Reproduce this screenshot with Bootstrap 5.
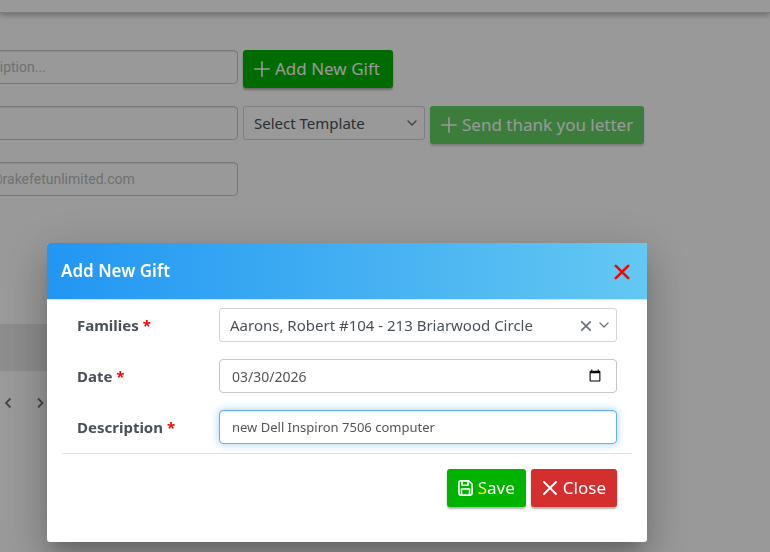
<!DOCTYPE html>
<html lang="en">
<head>
<meta charset="utf-8">
<meta name="viewport" content="width=device-width, initial-scale=1">
<title>Gifts</title>
<link href="https://cdn.jsdelivr.net/npm/bootstrap@5.3.0/dist/css/bootstrap.min.css" rel="stylesheet">
<style>
body{font-family:"Noto Sans","Open Sans",sans-serif;font-size:15px;color:#495057;background:#fff;overflow:hidden}
.topbar{height:13px;border-bottom:1px solid #d0d0d0;box-shadow:0 1px 7px rgba(0,0,0,.4)}
.content{padding-top:37px}
.rowline{height:34px;margin-bottom:22px;gap:5px}
.txt{width:250px;height:34px;margin-left:-12px;padding:0 12px 0 6px;border:1px solid #c4c8cc;border-radius:4px;font:14px/20px Roboto,sans-serif;box-shadow:inset 0 1px 1px rgba(0,0,0,.1)}
.mail{padding-left:1px}
.txt::placeholder{color:#bbb;opacity:1}
.act{height:38px;padding:0 11px;border:0;border-radius:3px;font-size:17px;line-height:38px;color:#fff;gap:5px;box-shadow:0 2px 2px rgba(0,0,0,.3);white-space:nowrap}
.act svg{flex:none}
.addbtn{min-width:150px}
.green,.green:hover{background:#00b300;color:#fff}
.red,.red:hover{background:#d32f2f;color:#fff}
.green:disabled{background:#00b300;color:#fff;opacity:.6}
.key{background:linear-gradient(#fff 50%,#ff0 60%);-webkit-background-clip:text;background-clip:text;color:transparent}
.pick{height:34px;padding:0 30px 0 10px;border:1px solid #ced4da;border-radius:3px;color:#495057;background:#fff;appearance:none;font-size:15px}
.tmpl{width:182px}
.pickwrap svg{position:absolute;right:8px;top:12px;pointer-events:none}
.clearbtn{position:absolute;right:25px;top:12px;line-height:0}
.band{width:340px;height:47px;background:#e9e9e9;margin-top:128px}
.pager{gap:23px;padding:22px 4px}
.modal-backdrop{--bs-backdrop-opacity:.4}
.gift{width:600px;max-width:none;margin:243px 0 0 47px}
.gift .modal-content{border:0;border-radius:3px;box-shadow:0 11px 15px -7px rgba(0,0,0,.2),0 24px 38px 3px rgba(0,0,0,.14),0 9px 46px 8px rgba(0,0,0,.12);color:#495057}
.gift .modal-header{height:57px;padding:0 17px 0 14px;border-bottom:1px solid #dee2e6;border-radius:3px 3px 0 0;background:linear-gradient(90deg,#2196f3,#64c8f2)}
.gift h1{font-size:17px;line-height:24px;font-weight:600;color:#fff}
.fields{padding:8px 15px 9px;margin:0 15px;border-bottom:1px solid #dee2e6;gap:17px}
.fieldrow{display:grid;grid-template-columns:142px 1fr;align-items:center}
.fieldrow label{font-weight:700;line-height:22px}
.fieldrow label span{color:red}
.entry{height:34px;padding:0 12px;border:1px solid #c4c8cc;border-radius:4px;font-size:14px;color:#555;background:#fff;width:100%}
.entry[type=text]{font-size:13px}
.entry:focus{outline:0;border-color:#66afe9;box-shadow:inset 0 1px 1px rgba(0,0,0,.075),0 0 8px rgba(102,175,233,.6)}
.foot{padding:15px 30px 35px;gap:5px}
</style>
<script src="https://cdn.jsdelivr.net/npm/bootstrap@5.3.0/dist/js/bootstrap.bundle.min.js"></script>
</head>
<body>
<header class="topbar"></header>
<main class="content">
  <div class="rowline d-flex">
    <input class="txt" type="text" placeholder="ription..." aria-label="Description">
    <button class="act addbtn green btn d-flex align-items-center" type="button"><svg width="16" height="16" viewBox="0 0 16 16" stroke="currentColor" stroke-width="1.6" stroke-linecap="round"><path d="M8 .8v14.4M.8 8h14.4"/></svg>Add New Gift</button>
  </div>
  <div class="rowline d-flex">
    <input class="txt" type="text" aria-label="Subject">
    <div class="pickwrap position-relative">
      <select class="pick tmpl" aria-label="Template"><option>Select Template</option></select>
      <svg width="10" height="10" viewBox="0 0 10 10" fill="none" stroke="#6c757d" stroke-width="1.5" stroke-linecap="round"><path d="M1 3l4 4 4-4"/></svg>
    </div>
    <button class="act green btn d-flex align-items-center" type="button" disabled><svg width="16" height="16" viewBox="0 0 16 16" stroke="currentColor" stroke-width="1.6" stroke-linecap="round"><path d="M8 .8v14.4M.8 8h14.4"/></svg>Send thank you letter</button>
  </div>
  <div class="rowline d-flex">
    <input class="txt mail" type="email" placeholder="@rakefetunlimited.com" aria-label="Email">
  </div>
  <div class="band"></div>
  <nav class="pager d-flex" aria-label="Pages">
    <button class="btn p-0 border-0 lh-1" type="button" aria-label="Previous"><svg width="9" height="12" viewBox="0 0 9 12" fill="none" stroke="#6c757d" stroke-width="1.8"><path d="M6.5 1.5L2 6l4.500 4.500"/></svg></button>
    <button class="btn p-0 border-0 lh-1" type="button" aria-label="Next"><svg width="9" height="12" viewBox="0 0 9 12" fill="none" stroke="#6c757d" stroke-width="1.8"><path d="M2 1.500L6.500 6 2 10.500"/></svg></button>
  </nav>
</main>
<div class="modal-backdrop show"></div>
<div class="modal d-block" role="dialog" aria-labelledby="giftTitle">
  <div class="modal-dialog gift">
    <form class="modal-content">
      <div class="modal-header">
        <h1 class="m-0" id="giftTitle">Add New Gift</h1>
        <button class="btn p-0 border-0 lh-1" type="button" aria-label="Close dialog"><svg width="16" height="16" viewBox="0 0 16 16" stroke="red" stroke-width="2.600" stroke-linecap="round"><path d="M1.800 1.800l12.400 12.400M14.200 1.800L1.800 14.200"/></svg></button>
      </div>
      <div class="fields d-flex flex-column">
        <div class="fieldrow">
          <label for="fam">Families <span>*</span></label>
          <div class="pickwrap position-relative">
            <select class="pick w-100" id="fam"><option>Aarons, Robert #104 - 213 Briarwood Circle</option></select>
            <button class="clearbtn btn p-0 border-0" type="button" aria-label="Clear"><svg class="position-static d-block" width="12" height="12" viewBox="0 0 12 12" stroke="#6c757d" stroke-width="1.800" stroke-linecap="round"><path d="M1.800 1.800l8.400 8.400M10.200 1.800l-8.400 8.400"/></svg></button>
            <svg width="10" height="10" viewBox="0 0 10 10" fill="none" stroke="#6c757d" stroke-width="1.300" stroke-linecap="round"><path d="M1 3l4 4 4-4"/></svg>
          </div>
        </div>
        <div class="fieldrow">
          <label for="day">Date <span>*</span></label>
          <input class="entry" id="day" type="date" value="2026-03-30">
        </div>
        <div class="fieldrow">
          <label for="desc">Description <span>*</span></label>
          <input class="entry" id="desc" type="text" value="new Dell Inspiron 7506 computer" autofocus>
        </div>
      </div>
      <div class="foot d-flex justify-content-end">
        <button class="act green btn d-flex align-items-center" type="button"><svg width="15" height="16" viewBox="0 0 15 16" fill="none" stroke="currentColor" stroke-width="1.600" stroke-linejoin="round"><path d="M2.500.9h8.300L14.100 4v9.500a1.600 1.600 0 0 1-1.600 1.600h-10A1.600 1.600 0 0 1 .9 13.500v-11A1.600 1.600 0 0 1 2.500.9zM4 1v4.200h6V1M3.500 15V9h8v6"/></svg><span><span class="key">S</span>ave</span></button>
        <button class="act red btn d-flex align-items-center" type="button"><svg width="16" height="16" viewBox="0 0 16 16" stroke="currentColor" stroke-width="1.900" stroke-linecap="round"><path d="M2 2l12 12M14 2L2 14"/></svg>Close</button>
      </div>
    </form>
  </div>
</div>
</body>
</html>
